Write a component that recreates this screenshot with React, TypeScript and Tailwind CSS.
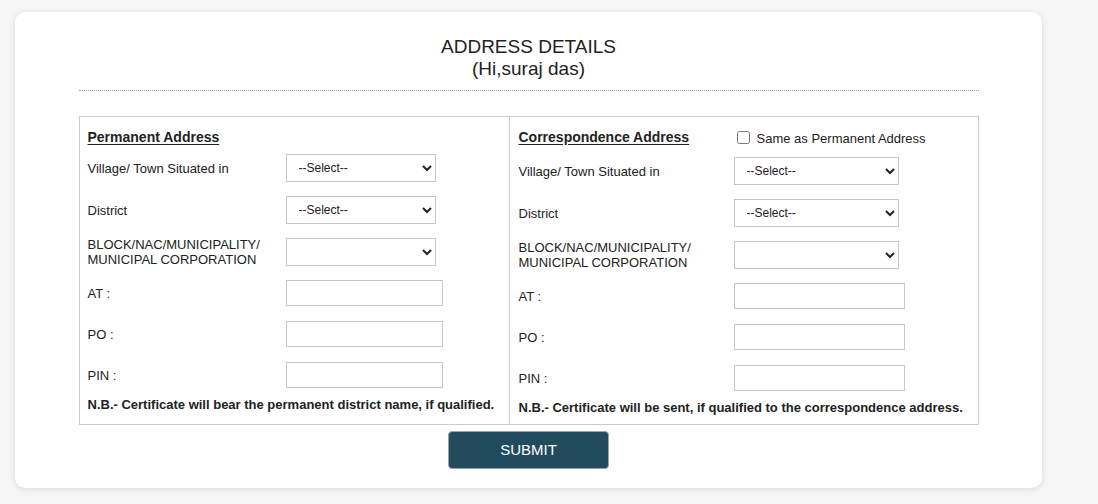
const font = { fontFamily: '"Liberation Sans", Arial, sans-serif' };

function SelectBox({ w, placeholder }: { w: string; placeholder?: string }) {
  return (
    <select
      className={`${w} h-[28px] border border-[#c8c8c8] bg-white pl-[8px] text-[12px] text-[#222]`}
      defaultValue=""
    >
      <option value="">{placeholder ?? ""}</option>
    </select>
  );
}

function TextBox({ w }: { w: string }) {
  return <input type="text" className={`${w} h-[26px] border border-[#c8c8c8] bg-white px-2 text-[12px]`} />;
}

function Column({
  labelW,
  selectW,
  inputW,
  note,
}: {
  labelW: string;
  selectW: string;
  inputW: string;
  note: string;
}) {
  const row = (label: React.ReactNode, control: React.ReactNode, mt: string) => (
    <div className={`flex h-[28px] items-center ${mt}`}>
      <div className={`${labelW} shrink-0 text-[13px] leading-[15px]`}>{label}</div>
      {control}
    </div>
  );
  const inRow = (label: string, mt: string) => (
    <div className={`flex h-[26px] items-center ${mt}`}>
      <div className={`${labelW} shrink-0 text-[13px] leading-[15px]`}>{label}</div>
      <TextBox w={inputW} />
    </div>
  );
  return (
    <>
      {row("Village/ Town Situated in", <SelectBox w={selectW} placeholder="--Select--" />, "mt-0")}
      {row("District", <SelectBox w={selectW} placeholder="--Select--" />, "mt-[14px]")}
      {row(
        <>
          BLOCK/NAC/MUNICIPALITY/
          <br />
          MUNICIPAL CORPORATION
        </>,
        <SelectBox w={selectW} />,
        "mt-[14px]"
      )}
      {inRow("AT :", "mt-[14px]")}
      {inRow("PO :", "mt-[15px]")}
      {inRow("PIN :", "mt-[15px]")}
      <div className="mt-[8px] text-[13px] font-bold leading-[18px]">{note}</div>
    </>
  );
}

export default function App() {
  return (
    <div className="min-h-[504px] bg-[#f6f6f6] pt-[12px] pl-[15px] text-[#222]" style={font}>
      <div className="flex h-[476px] w-[1027px] flex-col items-center rounded-[10px] bg-white px-16 pt-[24px] shadow-[0_1px_6px_rgba(0,0,0,0.12)]">
        <div className="text-center text-[19px] leading-[22px]">
          <div>ADDRESS DETAILS</div>
          <div>(Hi,suraj das)</div>
        </div>
        <div className="mt-[10px] w-[900px] border-t border-dotted border-[#aaa]" />

        <div className="mt-[25px] flex w-[900px] border border-[#ccc]">
          <div className="w-[430px] border-r border-[#ccc] pl-[8px] pt-[11px]">
            <div className="h-[18px] text-[14px] font-bold leading-[18px] underline underline-offset-2">
              Permanent Address
            </div>
            <div className="mt-[8px]">
              <Column
                labelW="w-[198px]"
                selectW="w-[150px]"
                inputW="w-[157px]"
                note="N.B.- Certificate will bear the permanent district name, if qualified."
              />
            </div>
          </div>
          <div className="flex-1 pl-[9px] pt-[11px] pb-[7px]">
            <div className="flex h-[21px]">
              <div className="w-[215px] shrink-0 text-[14px] font-bold leading-[18px] underline underline-offset-2">
                Correspondence Address
              </div>
              <label className="mt-[2px] ml-[3px] flex items-start gap-[7px] text-[13px] leading-[18px]">
                <input type="checkbox" className="mt-[1px] h-[13px] w-[13px]" />
                Same as Permanent Address
              </label>
            </div>
            <div className="mt-[8px]">
              <Column
                labelW="w-[215px]"
                selectW="w-[165px]"
                inputW="w-[171px]"
                note="N.B.- Certificate will be sent, if qualified to the correspondence address."
              />
            </div>
          </div>
        </div>

        <button className="mt-[6px] h-[38px] w-[161px] rounded-[4px] border border-[#9aa5ab] bg-[#224b5e] text-[15px] text-white">
          SUBMIT
        </button>
      </div>
    </div>
  );
}
